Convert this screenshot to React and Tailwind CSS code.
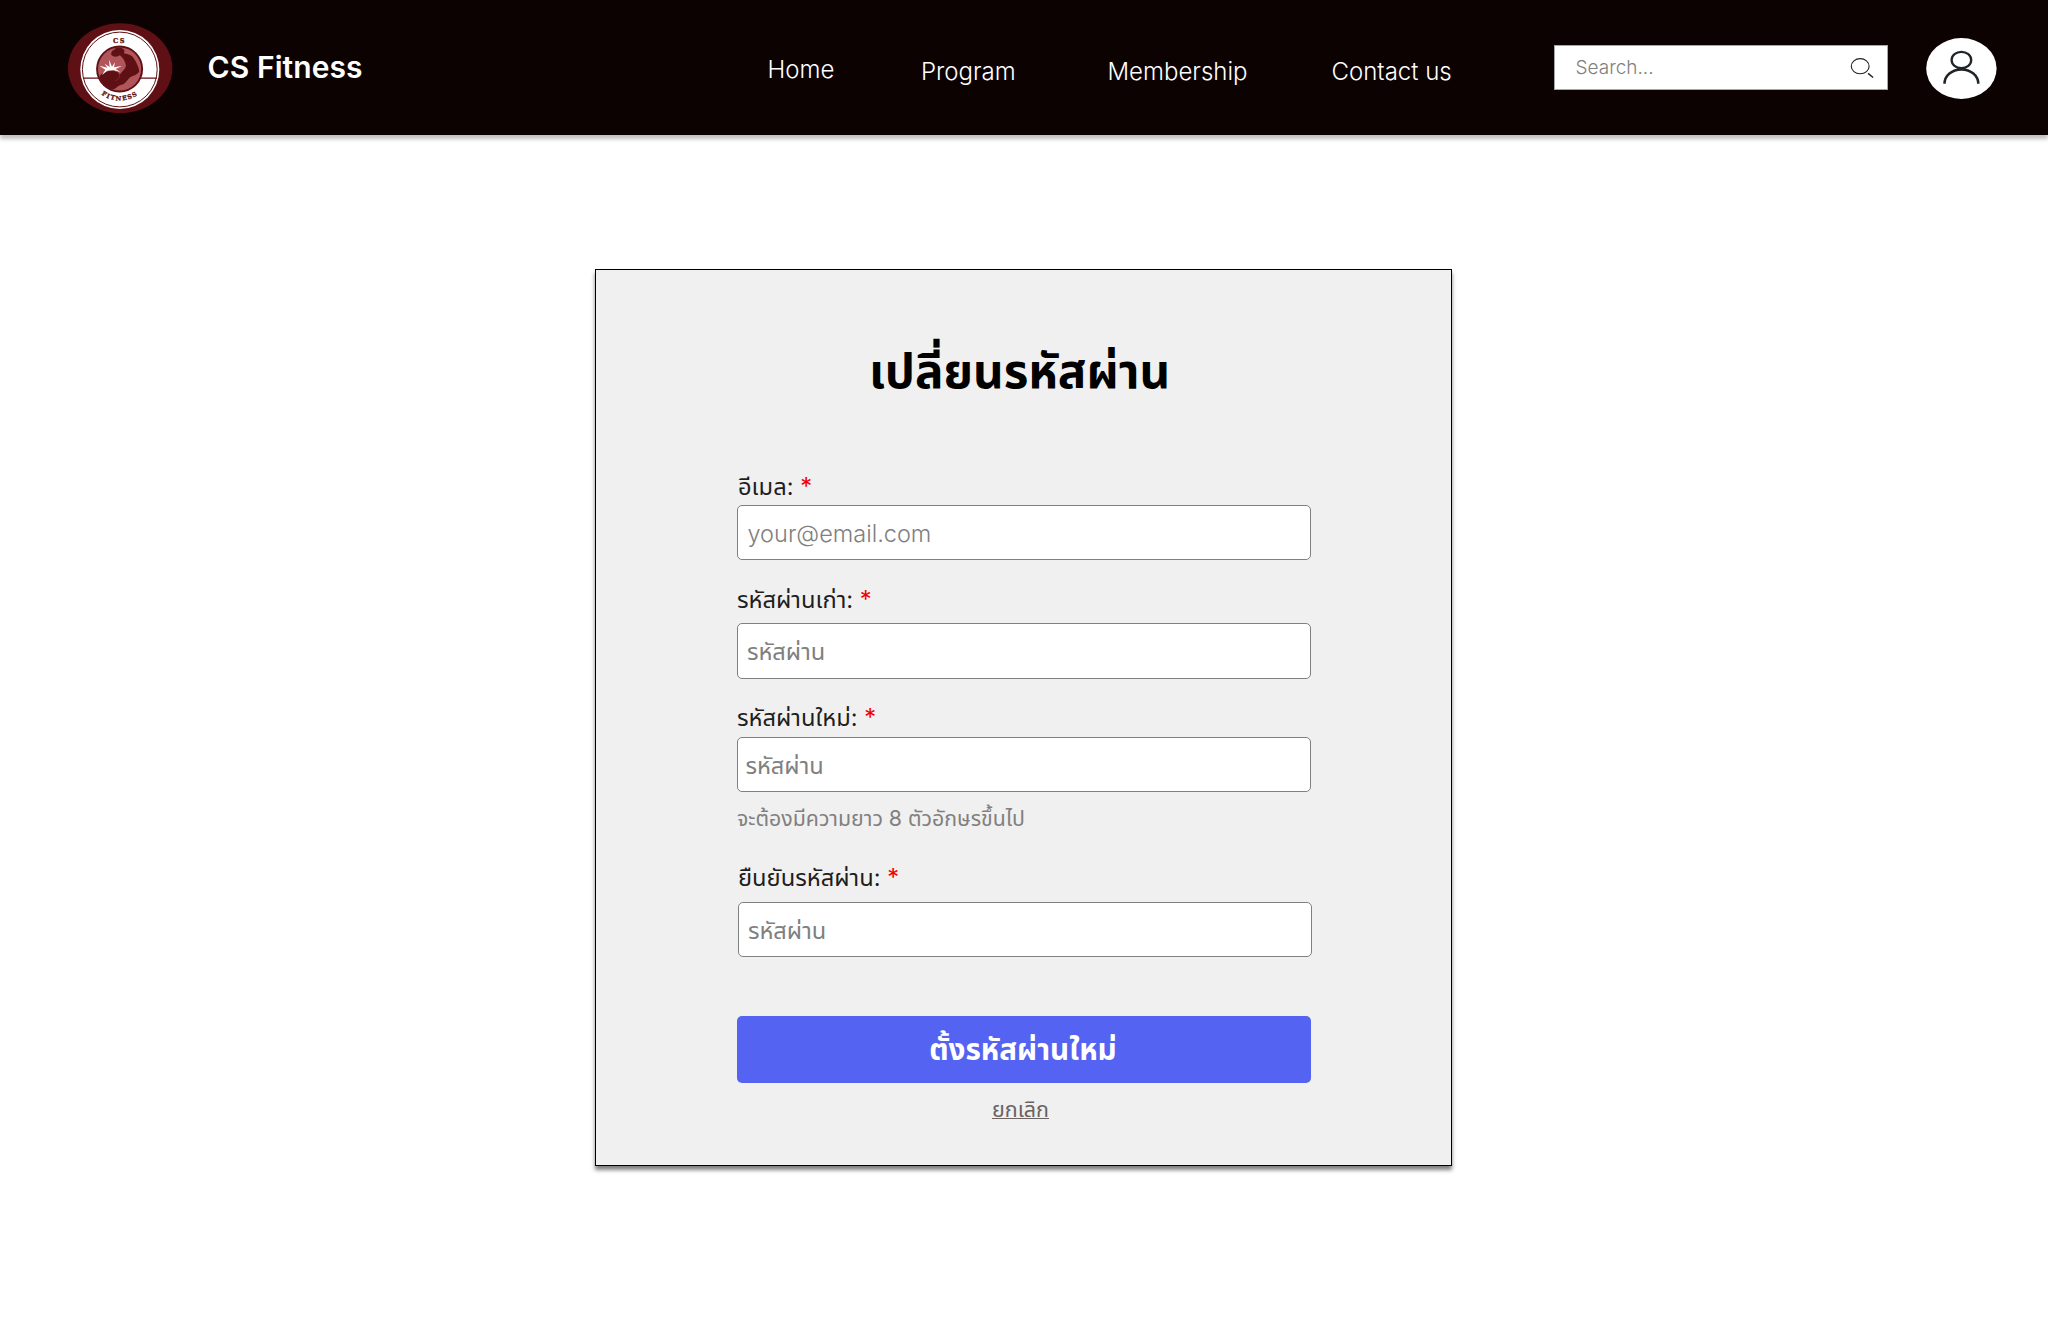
function Logo() {
  return (
    <svg className="ml-[68px] mt-[23px] h-[91px] w-[105px] shrink-0" viewBox="68 23 105 91">
      <ellipse cx="120.2" cy="68.2" rx="52.2" ry="44.9" fill="#5e1014" />
      <circle cx="119.8" cy="69.5" r="39.5" fill="#fff" />
      <circle cx="119.8" cy="69.5" r="37.4" fill="none" stroke="#5e1014" strokeWidth="1" />
      <path d="M83 78.2H157" stroke="#5e1014" strokeWidth="1.3" />
      <circle cx="119.6" cy="69" r="23.5" fill="#5e1014" />
      <circle cx="119.6" cy="69" r="21.6" fill="#b0555a" />
      <clipPath id="disc">
        <circle cx="119.6" cy="69" r="21.8" />
      </clipPath>
      <g clipPath="url(#disc)">
        <g transform="translate(80 25) scale(.3333)">
          <path
            d="M94 90C92 83 96 75 103 74C108 66 120 65 126 70C134 72 135 81 131 85C146 87 157 92 162 101C171 114 177 128 178 140C171 149 163 151 153 155C143 160 140 176 122 180C112 182 108 194 90 196C70 188 50 172 58 156C64 142 82 137 101 138C112 139 117 144 119 149C126 140 136 132 138 122C136 110 130 99 120 91C112 96 102 97 94 90Z"
            fill="#5e1014"
          />
          <path d="M119 149C120 158 114 164 106 167" stroke="#8a3a3f" strokeWidth="2" fill="none" />
          <path
            d="M58 122L82 128L74 116L89 126L87 104L96 125L105 112L102 127L126 123L107 132L121 141L100 135L82 137L66 150L76 134Z"
            fill="#fff"
          />
        </g>
      </g>
      <path id="bottom-arc" d="M88.3 69A31.5 31.5 0 0 0 151.3 69" fill="none" />
      <text
        x="119.4"
        y="42.5"
        textAnchor="middle"
        fill="#5e1014"
        stroke="#5e1014"
        strokeWidth="0.3"
        letterSpacing="1.3"
        className="font-['DejaVu_Serif',serif] text-[6.6px] font-bold"
      >
        CS
      </text>
      <text
        fill="#5e1014"
        stroke="#5e1014"
        strokeWidth="0.3"
        letterSpacing="1.2"
        className="font-['DejaVu_Serif',serif] text-[6.2px] font-bold"
      >
        <textPath href="#bottom-arc" startOffset="50%" textAnchor="middle">
          FITNESS
        </textPath>
      </text>
    </svg>
  );
}

function SearchIcon() {
  return (
    <svg className="h-[21px] w-[24px]" viewBox="1850.5 58.5 24 21" fill="none" stroke="#222">
      <ellipse cx="1860.7" cy="67.7" rx="8.9" ry="7.6" strokeWidth="1.1" />
      <path d="M1868.6 74.9L1873.6 79" strokeWidth="1.4" />
    </svg>
  );
}

function Avatar() {
  return (
    <svg className="mr-[51px] mt-[38px] h-[61px] w-[71px] shrink-0" viewBox="1926 38 71 61" fill="none">
      <ellipse cx="1961.4" cy="68.5" rx="35.2" ry="30.4" fill="#fff" />
      <ellipse cx="1961.4" cy="60" rx="9.8" ry="8.2" stroke="#212529" strokeWidth="2.3" />
      <path
        d="M1944.5 83.8C1944.5 75.5 1952 69.4 1961.4 69.4S1978.3 75.5 1978.3 83.8"
        stroke="#212529"
        strokeWidth="2.5"
      />
    </svg>
  );
}

function Label({ children, className }) {
  return (
    <div className={`h-[30px] whitespace-nowrap text-[23.7px] leading-[30px] text-[#1e1e1e] ${className}`}>
      {children} <span className="text-[#f20000]">*</span>
    </div>
  );
}

function Field({ children, className }) {
  return (
    <div
      className={`flex w-[574px] items-center whitespace-nowrap rounded-[5px] border border-[#808080] bg-white pt-[2px] text-[#808080] ${className}`}
    >
      {children}
    </div>
  );
}

export default function App() {
  return (
    <div className="h-[1321px] w-[2048px] overflow-hidden bg-white font-['Inter','Noto_Sans_Thai',sans-serif]">
      <header className="flex h-[135px] items-start whitespace-nowrap bg-[#0d0202] text-white shadow-[0_4px_4px_rgba(0,0,0,0.25)]">
        <Logo />
        <div className="ml-[34.5px] mt-[49px] w-[160px] text-[30px] font-semibold leading-[36px] tracking-[0.08px]">
          CS Fitness
        </div>
        <nav className="ml-[400px] flex text-[24px] font-[350] leading-[30px]">
          <a className="mt-[55px] w-[153.5px]">Home</a>
          <a className="mt-[56.5px] w-[186.5px]">Program</a>
          <a className="mt-[56.5px] w-[224px]">Membership</a>
          <a className="mt-[56.5px] w-[140px]">Contact us</a>
        </nav>
        <div className="ml-auto mr-[38px] mt-[45px] flex h-[45px] w-[334px] shrink-0 items-center justify-between border border-[#a8a8a8] bg-white pl-[20.5px] pr-[13px] text-[#808080]">
          <span className="pt-[2px] text-[19px] font-[350]">Search...</span>
          <SearchIcon />
        </div>
        <Avatar />
      </header>

      <main className="ml-[595px] mt-[134px] flex h-[897px] w-[857px] flex-col border border-black bg-[#f0f0f0] pl-[141px] shadow-[0_4px_4px_rgba(0,0,0,0.5)]">
        <h1 className="ml-[132px] mt-[71px] h-[60px] whitespace-nowrap text-[47.5px] font-bold leading-[60px] text-black">
          เปลี่ยนรหัสผ่าน
        </h1>
        <Label className="ml-[1px] mt-[71px]">อีเมล:</Label>
        <Field className="mt-[3px] h-[55px] pl-[9.5px] text-[23.5px] font-[350]">your@email.com</Field>
        <Label className="mt-[25px]">รหัสผ่านเก่า:</Label>
        <Field className="mt-[8px] h-[56px] pl-[9px] text-[23.6px]">รหัสผ่าน</Field>
        <Label className="mt-[24px]">รหัสผ่านใหม่:</Label>
        <Field className="mt-[4px] h-[55px] pl-[7.5px] text-[23.6px]">รหัสผ่าน</Field>
        <p className="mt-[11px] h-[30px] whitespace-nowrap text-[21.3px] leading-[30px] text-[#808080]">
          จะต้องมีความยาว 8 ตัวอักษรขึ้นไป
        </p>
        <Label className="ml-[1px] mt-[30px]">ยืนยันรหัสผ่าน:</Label>
        <Field className="ml-[1px] mt-[9px] h-[55px] pl-[9px] text-[23.6px]">รหัสผ่าน</Field>
        <button className="mt-[59px] flex h-[67px] w-[574px] items-center justify-center rounded-[5px] bg-[#5463f2] pr-[2px] text-[29.6px] font-bold text-white">
          ตั้งรหัสผ่านใหม่
        </button>
        <a className="ml-[255px] mt-[11px] h-[30px] text-[21.5px] leading-[30px] text-[#6b6262] underline decoration-1">
          ยกเลิก
        </a>
      </main>
    </div>
  );
}
